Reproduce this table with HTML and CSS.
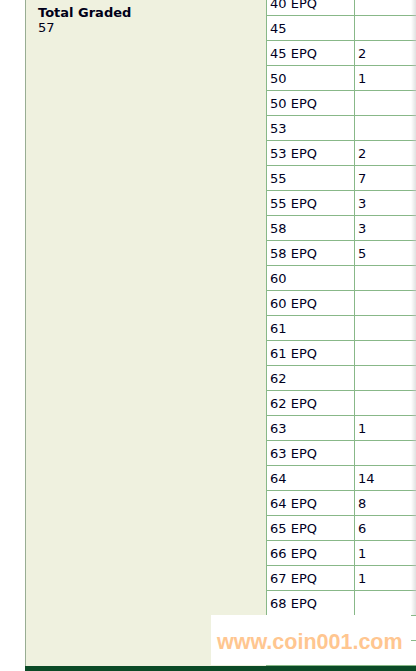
FILE: index.html
```html
<!DOCTYPE html>
<html>
<head>
<meta charset="utf-8">
<link rel="stylesheet" href="styles.css">
</head>
<body>
<div class="page">
  <div class="panel">
    <div class="summary">
      <div class="label">Total Graded</div>
      <div class="value">57</div>
    </div>
    <table class="grades">
      <tr><td class="g">40 EPQ</td><td class="n"></td></tr>
      <tr><td class="g">45</td><td class="n"></td></tr>
      <tr><td class="g">45 EPQ</td><td class="n">2</td></tr>
      <tr><td class="g">50</td><td class="n">1</td></tr>
      <tr><td class="g">50 EPQ</td><td class="n"></td></tr>
      <tr><td class="g">53</td><td class="n"></td></tr>
      <tr><td class="g">53 EPQ</td><td class="n">2</td></tr>
      <tr><td class="g">55</td><td class="n">7</td></tr>
      <tr><td class="g">55 EPQ</td><td class="n">3</td></tr>
      <tr><td class="g">58</td><td class="n">3</td></tr>
      <tr><td class="g">58 EPQ</td><td class="n">5</td></tr>
      <tr><td class="g">60</td><td class="n"></td></tr>
      <tr><td class="g">60 EPQ</td><td class="n"></td></tr>
      <tr><td class="g">61</td><td class="n"></td></tr>
      <tr><td class="g">61 EPQ</td><td class="n"></td></tr>
      <tr><td class="g">62</td><td class="n"></td></tr>
      <tr><td class="g">62 EPQ</td><td class="n"></td></tr>
      <tr><td class="g">63</td><td class="n">1</td></tr>
      <tr><td class="g">63 EPQ</td><td class="n"></td></tr>
      <tr><td class="g">64</td><td class="n">14</td></tr>
      <tr><td class="g">64 EPQ</td><td class="n">8</td></tr>
      <tr><td class="g">65 EPQ</td><td class="n">6</td></tr>
      <tr><td class="g">66 EPQ</td><td class="n">1</td></tr>
      <tr><td class="g">67 EPQ</td><td class="n">1</td></tr>
      <tr><td class="g">68 EPQ</td><td class="n"></td></tr>
      <tr><td class="g"></td><td class="n"></td></tr>
      <tr><td class="g last"></td><td class="n last"></td></tr>
    </table>
  </div>
  <div class="footer"></div>
</div>
<div class="edge-shadow"></div>
<div class="watermark">www.coin001.com</div>
</body>
</html>
```

FILE: styles.css
```css
html, body {
  margin: 0;
  padding: 0;
  background: #ffffff;
  overflow: hidden;
}
body {
  position: relative;
  width: 416px;
  height: 671px;
  font-family: "DejaVu Sans", Verdana, sans-serif;
  font-size: 13px;
}
.page {
  margin-left: 25px;
  width: 520px;
}
.panel {
  display: flex;
  align-items: flex-start;
  background: #eff1df;
  border-left: 1px solid #98ad93;
}
.summary {
  width: 240px;
  box-sizing: border-box;
  padding: 5px 0 0 12px;
  line-height: 15px;
  color: #000018;
}
.label {
  font-weight: bold;
}
.grades {
  margin-top: -10px;
  border-collapse: separate;
  border-spacing: 0;
  background: #ffffff;
  color: #00001e;
}
.grades td {
  height: 25px;
  box-sizing: border-box;
  padding: 0 0 0 3px;
  border-top: 1px solid #88b888;
  border-left: 1px solid #88b888;
  vertical-align: middle;
  white-space: nowrap;
}
.grades td.g {
  width: 88px;
}
.grades td.n {
  width: 140px;
  border-right: 1px solid #88b888;
}
.grades td.last {
  height: 26px;
  border-bottom: 1px solid #88b888;
}
.footer {
  height: 10px;
  background: #0b4a26;
}
.edge-shadow {
  position: absolute;
  top: 0;
  left: 411px;
  width: 5px;
  height: 615px;
  background: linear-gradient(to right, rgba(200,200,200,0), rgba(200,200,200,0.55));
}
.watermark {
  position: absolute;
  left: 211px;
  top: 615px;
  width: 200px;
  height: 50px;
  box-sizing: border-box;
  background: #ffffff;
  padding: 15px 0 0 6px;
  font-family: "Liberation Sans", Arial, sans-serif;
  font-weight: bold;
  font-size: 21.5px;
  line-height: 24px;
  color: #ffc690;
  white-space: nowrap;
}
```
